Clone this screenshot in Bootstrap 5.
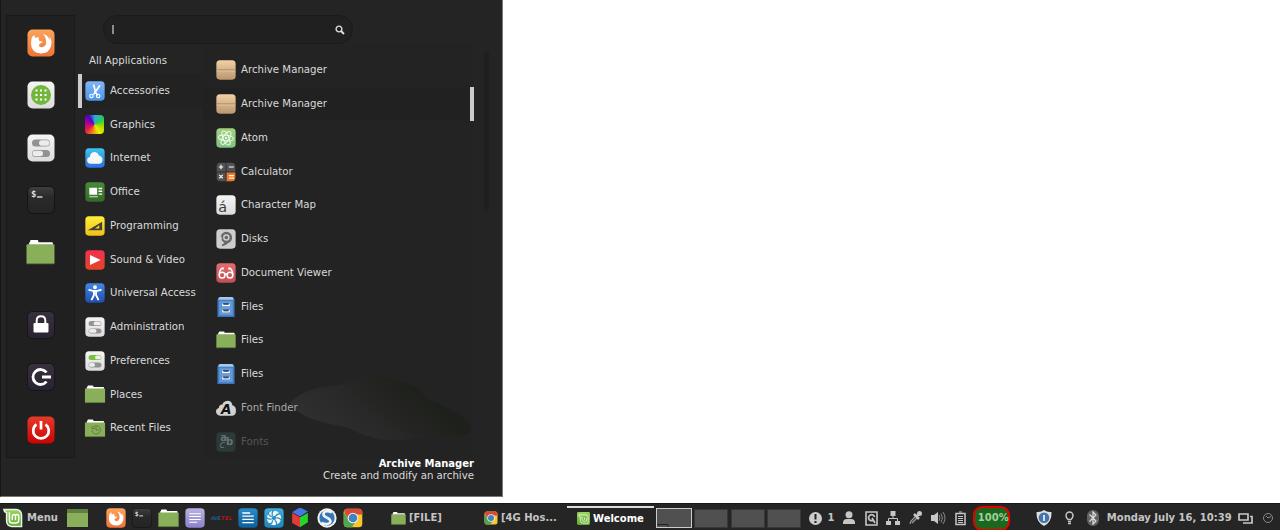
<!DOCTYPE html>
<html lang="en">
<head>
<meta charset="utf-8">
<meta name="viewport" content="width=device-width, initial-scale=1">
<title>Desktop menu</title>
<link rel="stylesheet" href="https://cdn.jsdelivr.net/npm/bootstrap@5.3.0/dist/css/bootstrap.min.css">
<style>
body{font:10.2px/14px "DejaVu Sans",sans-serif;color:#dadada;background:#fff;height:530px}
svg{display:block;flex:none;overflow:visible}
.start-menu{width:503px;height:497px;background:#242424;border-right:1px solid #777;border-bottom:1px solid #777;border-left:1px solid #151515;padding:15px 0 0 5px}
.favorites{width:69px;height:443px;background:#202020;border:1px solid #191919;padding:.5px 0 1px}
.favorites .slot{height:52.5px}
.search-box{width:250px;height:29px;margin-left:28px;border:1px solid #1a1a1a;border-radius:15px;background:#202020;padding:0 7px 0 8px}
.caret{width:2px;height:9px;background:#8c8c8c}
.cats{width:128px;padding-left:3px}
.all-apps{height:30px;padding:10px 0 0 11px}
.entry{position:relative;height:33.75px;white-space:nowrap}
.cats .entry{border-left:4px solid transparent;padding-left:2.500px;gap:5.500px}
.cats .entry.current{border-color:#ccc;background:#222}
.apps{width:271px;padding:9.500px 0 0 0;position:relative;background:#232323}
.apps .entry{border-right:4px solid transparent;padding-left:13px;gap:5px}
.apps .entry.current{border-color:#ccc;background:#212121}
.scroller{width:5px;height:159px;background:#1f1f1f;margin:8px 0 0 10px}
.smoke{position:absolute;left:87px;top:331px}
.about{position:absolute;right:0;top:414px;line-height:12px;white-space:nowrap}
.about .fw-bold{font-size:10px}
.spectrum{width:19px;height:19px;margin:.5px;border-radius:4px;background:conic-gradient(#2caad8,#28cb5e 60deg,#8fdc00 95deg,#f0ee00 150deg,#f58a17 190deg,#e51b47 235deg,#a8009c 280deg,#5400c6 325deg,#2caad8)}
.taskbar{height:27px;background:#252525;border-top:1px solid #15191b;font-size:10px;font-weight:bold;color:#c4c4c4;white-space:nowrap;overflow:hidden;padding-top:2px}
.taskbar>*{flex:none}
.launch{width:26.3px}
.task{gap:3px}
.menu-label{margin-left:4px;width:40px}
.launchers{margin-left:15px}
.task-file{margin-left:25px;width:93px}
.task-web{width:83px}
.active-task{width:87px;height:24px;border-top:2px solid #ddd;padding-left:10px;padding-bottom:1px}
.desks{gap:2.500px;margin-left:2px}
.desk{width:34px;height:19px;background:#505050;border:1px solid #383838}
.desk.on{width:36px;height:20px;border:1px solid #ccc}
.alerts{gap:5px;margin-left:8px;width:28px}
.tray-slot{width:22.4px}
.battery-pct{width:37px;height:25px;border:2px solid #e60000;border-radius:9px;background:#1d661d;padding-left:3px;margin-left:1px;color:#9ed29e}
.shield{margin-left:26px}
.bulb{margin-left:13px}
.bt{margin-left:13px}
.clock-text{margin-left:8px;width:131px}
.dial{margin-left:10px}
</style>
</head>
<body class="d-flex flex-column justify-content-between overflow-hidden">
<svg width="0" height="0" class="position-absolute" aria-hidden="true">
<defs>
<linearGradient id="g-fox" x2="0" y2="1"><stop stop-color="#fba35c"/><stop offset="1" stop-color="#ef7434"/></linearGradient>
<linearGradient id="g-white" x2="0" y2="1"><stop stop-color="#f5f5f5"/><stop offset="1" stop-color="#dcdcdc"/></linearGradient>
<linearGradient id="g-term" x2="0" y2="1"><stop stop-color="#3f3f3f"/><stop offset=".4" stop-color="#2a2a2a"/><stop offset="1" stop-color="#242424"/></linearGradient>
<linearGradient id="g-dark" x2="0" y2="1"><stop stop-color="#37313d"/><stop offset="1" stop-color="#282330"/></linearGradient>
<linearGradient id="g-red" x2="0" y2="1"><stop stop-color="#e63a2a"/><stop offset="1" stop-color="#cc0202"/></linearGradient>
<linearGradient id="g-blue" x2="0" y2="1"><stop stop-color="#7fb6f5"/><stop offset="1" stop-color="#4c94ea"/></linearGradient>
<linearGradient id="g-net" x2="0" y2="1"><stop stop-color="#3fc4ea"/><stop offset="1" stop-color="#2a6fe6"/></linearGradient>
<linearGradient id="g-office" x2="0" y2="1"><stop stop-color="#478a37"/><stop offset="1" stop-color="#336b28"/></linearGradient>
<linearGradient id="g-yel" x2="0" y2="1"><stop stop-color="#ffee3a"/><stop offset="1" stop-color="#eec11b"/></linearGradient>
<linearGradient id="g-vid" x2="0" y2="1"><stop stop-color="#f3304f"/><stop offset="1" stop-color="#e44428"/></linearGradient>
<linearGradient id="g-acc" x2="0" y2="1"><stop stop-color="#4585e6"/><stop offset="1" stop-color="#1d50b0"/></linearGradient>
<linearGradient id="g-box" x2="0" y2="1"><stop stop-color="#f3d1a3"/><stop offset="1" stop-color="#b9966f"/></linearGradient>
<linearGradient id="g-atom" x2="0" y2="1"><stop stop-color="#a3d37e"/><stop offset="1" stop-color="#7fc283"/></linearGradient>
<linearGradient id="g-doc" x2="0" y2="1"><stop stop-color="#e36c6f"/><stop offset="1" stop-color="#c04f53"/></linearGradient>
<linearGradient id="g-pur" x2="0" y2="1"><stop stop-color="#b9b2e2"/><stop offset="1" stop-color="#8a83cb"/></linearGradient>
<linearGradient id="g-wr" x2="0" y2="1"><stop stop-color="#2a8bc9"/><stop offset="1" stop-color="#0c5f9c"/></linearGradient>
<linearGradient id="g-shut" x2="0" y2="1"><stop stop-color="#3caedb"/><stop offset="1" stop-color="#1f84ba"/></linearGradient>
<linearGradient id="g-mint" x2="0" y2="1"><stop stop-color="#9bd55c"/><stop offset="1" stop-color="#5fa936"/></linearGradient>
<linearGradient id="g-smoke" x1="0" x2="1" y1=".6" y2=".2"><stop stop-color="#303030"/><stop offset=".3" stop-color="#2a2a2a"/><stop offset=".75" stop-color="#1e201b"/><stop offset="1" stop-color="#20221e"/></linearGradient>
<clipPath id="c-tile"><rect x="1" y="1" width="26" height="26" rx="5"/></clipPath>
</defs>
<symbol id="firefox" viewBox="0 0 28 28"><rect x=".5" y=".5" width="27" height="27" rx="5" fill="url(#g-fox)"/><path fill="#fff" d="M5 8l2.500-2 .5 3q2-1 4-.5-1 2 .5 3.500l3 .5q0 1.500-2.500 2-2 1.500-.5 3 2 1.500 4.500 0 2.500-1.500 2-5Q19 8 16 5q5 1 6.500 6 .5-2-.5-4 3.500 4 2 10-2 7.500-10 7.500Q4.500 24 4 15q0-4 1-7z"/></symbol>
<symbol id="appgrid" viewBox="0 0 28 28"><rect x=".5" y=".5" width="27" height="27" rx="5" fill="url(#g-white)"/><circle cx="14" cy="14" r="10" fill="#72b63c"/><path d="M8.500 9.500h11M8.500 14h11M8.500 18.500h11" stroke="#fff" stroke-width="2" stroke-dasharray="2 2.500"/></symbol>
<symbol id="toggles" viewBox="0 0 28 28"><rect x=".5" y=".5" width="27" height="27" rx="5" fill="url(#g-white)"/><rect x="5" y="5.500" width="18" height="7" rx="3.500" fill="#929292"/><rect x="12" y="6.300" width="10.500" height="5.400" rx="2.700" fill="#ececec"/><rect x="5" y="16" width="18" height="7" rx="3.500" fill="#929292"/><rect x="5.500" y="16.800" width="10.500" height="5.400" rx="2.700" fill="#ececec"/></symbol>
<symbol id="toggles-on" viewBox="0 0 28 28"><rect x=".5" y=".5" width="27" height="27" rx="5" fill="url(#g-white)"/><rect x="5" y="5.500" width="18" height="7" rx="3.500" fill="#79c238"/><rect x="14" y="6.300" width="8.500" height="5.400" rx="2.700" fill="#ececec"/><rect x="5" y="16" width="18" height="7" rx="3.500" fill="#929292"/><rect x="5.500" y="16.800" width="8.500" height="5.400" rx="2.700" fill="#ececec"/></symbol>
<symbol id="terminal" viewBox="0 0 28 28"><rect x=".5" y=".5" width="27" height="27" rx="5" fill="url(#g-term)" stroke="#141414"/><text x="4" y="10.500" font-family="DejaVu Sans Mono,monospace" font-weight="bold" font-size="9" fill="#ddd">$</text><path d="M10 11h5.500" stroke="#bbb" stroke-width="1.700"/></symbol>
<symbol id="folder" viewBox="0 0 28 28"><path d="M3 10V5q0-1 1-1.500V3q0-1 1-1h6q1 0 1 2h13q1 0 1 1v5z" fill="#fff"/><path d="M.5 7q0-1 1-1h25q1 0 1 1v17q0 1-1 1h-25q-1 0-1-1z" fill="#8aaf5a"/><path d="M.5 24.800h27" stroke="#5d7a3b"/></symbol>
<symbol id="lock" viewBox="0 0 28 28"><rect x=".5" y=".5" width="27" height="27" rx="5" fill="url(#g-dark)" stroke="#17141b"/><rect x="6.500" y="12" width="15" height="9.500" rx="1" fill="#fff"/><path d="M9.700 13V9.500q0-4.300 4.300-4.300t4.300 4.300V13" fill="none" stroke="#fff" stroke-width="2"/></symbol>
<symbol id="logout" viewBox="0 0 28 28"><rect x=".5" y=".5" width="27" height="27" rx="5" fill="url(#g-dark)" stroke="#17141b"/><path d="M19.500 9.500A7.500 7.500 0 1 0 19.500 18.500M15 14h9" fill="none" stroke="#fff" stroke-width="2.800"/></symbol>
<symbol id="power" viewBox="0 0 28 28"><rect x=".5" y=".5" width="27" height="27" rx="5" fill="url(#g-red)"/><path d="M9.500 8.300A7.800 7.800 0 1 0 18.500 8.300M14 5v8.500" fill="none" stroke="#fff" stroke-width="2.700"/></symbol>
<symbol id="scissors" viewBox="0 0 28 28"><rect x=".5" y=".5" width="27" height="27" rx="5" fill="url(#g-blue)"/><path d="M12 5l3 11M21 6l-9 13M13 14l5 6" stroke="#fff" stroke-width="2.200"/><circle cx="9" cy="21" r="2.400" fill="none" stroke="#fff" stroke-width="1.600"/><circle cx="18.500" cy="21" r="2.400" fill="none" stroke="#fff" stroke-width="1.600"/></symbol>
<symbol id="cloud" viewBox="0 0 28 28"><rect x=".5" y=".5" width="27" height="27" rx="5" fill="url(#g-net)"/><path d="M7 22q-4-1-4-5t4-4.500q0-6 6-7 5 0 6.500 5 5 1 5 6t-4 5.500z" fill="#f7f7f7"/></symbol>
<symbol id="office" viewBox="0 0 28 28"><rect x=".5" y=".5" width="27" height="27" rx="5" fill="url(#g-office)"/><path d="M6 8h11v10H6zM19 8h5v2h-5zm0 4h5v2h-5zm0 4h5v2h-5z" fill="#fff"/><path d="M6 20.500h12" stroke="#abc6a5" stroke-width="2"/></symbol>
<symbol id="program" viewBox="0 0 28 28"><rect x=".5" y=".5" width="27" height="27" rx="5" fill="url(#g-yel)"/><path fill-rule="evenodd" d="M4 20L24 8v12zM14 17.500h6V13z" fill="#463f35"/></symbol>
<symbol id="video" viewBox="0 0 28 28"><rect x=".5" y=".5" width="27" height="27" rx="5" fill="url(#g-vid)"/><path d="M7 7l15 7-15 7z" fill="#fff"/></symbol>
<symbol id="access" viewBox="0 0 28 28"><rect x=".5" y=".5" width="27" height="27" rx="5" fill="url(#g-acc)"/><circle cx="14" cy="6" r="2.700" fill="#fff"/><path d="M5 9.500l6 1.500h6l6-1.500M12.500 11v6L9 24M15.500 11v6l3.500 7" fill="none" stroke="#fff" stroke-width="2.700"/></symbol>
<symbol id="archive" viewBox="0 0 28 28"><rect x=".5" y=".5" width="27" height="27" rx="5" fill="url(#g-box)"/><path d="M1 14h26" stroke="#9a7d61" stroke-width="1.300"/><path d="M1 15.300h26" stroke="#ecd0ac"/></symbol>
<symbol id="atom" viewBox="0 0 28 28"><rect x=".5" y=".5" width="27" height="27" rx="5" fill="url(#g-atom)"/><g fill="none" stroke="#f1faec" stroke-width="1.400"><ellipse cx="14" cy="14" rx="10.500" ry="4" transform="rotate(8 14 14)"/><ellipse cx="14" cy="14" rx="10.500" ry="4" transform="rotate(67 14 14)"/><ellipse cx="14" cy="14" rx="10.500" ry="4" transform="rotate(125 14 14)"/></g><circle cx="14" cy="14" r="1.500" fill="#fff"/></symbol>
<symbol id="calc" viewBox="0 0 28 28"><g clip-path="url(#c-tile)"><path d="M0 0h28v28H0z" fill="#525252"/><path d="M14.500 14.500H28V28H14.500z" fill="#f47523"/></g><path d="M14 1v26M1 14h26" stroke="#242424"/><path d="M4 7h6M7 4v6M18 7h7M4.500 18l5 5M9.500 18l-5 5M18 19h7M18 22.500h7" stroke="#fff" stroke-width="1.600"/></symbol>
<symbol id="disks" viewBox="0 0 28 28"><rect x=".5" y=".5" width="27" height="27" rx="5" fill="#cecece"/><circle cx="14.500" cy="12" r="6.300" fill="none" stroke="#696969" stroke-width="3.500"/><circle cx="14.500" cy="12" r="2.500" fill="#696969"/><path d="M4 11h4v5l4 4-4 4-3-3 3-2z" fill="#cecece"/><path d="M8 22l5-3 4 1q-3 3-8 4z" fill="#696969"/></symbol>
<symbol id="viewer" viewBox="0 0 28 28"><rect x=".5" y=".5" width="27" height="27" rx="5" fill="url(#g-doc)"/><g fill="none" stroke="#fff" stroke-width="2"><circle cx="8.500" cy="17" r="4"/><circle cx="19.500" cy="17" r="4"/><path d="M12.500 16q1.500-1 3 0M4.500 17q0-8 5-10l1 2M23.500 17q0-8-5-10l-1 2"/></g></symbol>
<symbol id="cabinet" viewBox="0 0 28 28"><path d="M4 0h20l2 4v24H2V4z" fill="#3974bd"/><path d="M5 0h18l2 4H3z" fill="#a4c7ea"/><path d="M4 5h20v21H4z" fill="#5b91d2"/><path d="M7 7.500h14v7H7zM7 16.500h14v7H7z" fill="#487ebd" stroke="#80ade2"/><path d="M9.500 9v3h9V9M9.500 18v3h9v-3" fill="none" stroke="#fff" stroke-width="1.700"/><path d="M10 9.500h8M10 18.500h8" stroke="#373d48" stroke-width="1.500"/></symbol>
<symbol id="chrome" viewBox="0 0 28 28"><g clip-path="url(#c-tile)"><path d="M0 0h28v28H0z" fill="#f7c82e"/><path d="M0 0h28v9H14l-5 8L3 8z" fill="#da4938"/><path d="M0 4l9 14 8 2-5 8H0z" fill="#53a351"/></g><circle cx="14" cy="14" r="7.500" fill="#eee"/><circle cx="14" cy="14" r="6" fill="#4382c4"/></symbol>
<symbol id="notes" viewBox="0 0 28 28"><rect x=".5" y=".5" width="27" height="27" rx="5" fill="url(#g-pur)"/><path d="M6 8h16M6 12h16M6 16h16M6 20h11" stroke="#fff" stroke-width="1.500"/></symbol>
<symbol id="writer" viewBox="0 0 28 28"><rect x=".5" y=".5" width="27" height="27" rx="5" fill="url(#g-wr)"/><path d="M6 7h11M6 11.500h16M6 16h16M6 20.500h16" stroke="#fff" stroke-width="1.800"/></symbol>
<symbol id="shutter" viewBox="0 0 28 28"><rect x=".5" y=".5" width="27" height="27" rx="5" fill="url(#g-shut)"/><circle cx="14" cy="14" r="10" fill="#f4fafc"/><path d="M14 3q-4 3-2 8M23 8q-5 0-7 4M24 17q-2-4-7-3M17 25q2-5-2-8M7 22q5 0 5-5M4 13q2 4 7 2M6 6q0 5 5 6" fill="none" stroke="#288fbe" stroke-width="1.700"/><circle cx="14" cy="14" r="3" fill="#288fbe"/></symbol>
<symbol id="cube" viewBox="0 0 28 28"><path d="M14-1l11 6-11 7L3 6z" fill="#4778e2"/><path d="M3 7l11 6v14L3 21z" fill="#e53a3a"/><path d="M25 7l-11 6v14l11-7z" fill="#26d52c"/></symbol>
<symbol id="swirl" viewBox="0 0 28 28"><circle cx="14" cy="14" r="13.500" fill="#f2f2f2"/><circle cx="14" cy="14" r="10.700" fill="#3675b5"/><path d="M21 6q-10-4-12 2c-1 6 10 5 10 11q-2 6-13 2" fill="none" stroke="#f2f2f2" stroke-width="3.600"/></symbol>
<symbol id="mint" viewBox="0 0 28 28"><path d="M0 1h19q8 1 8 9v17H12q-8-1-8-9V7Q1 7 0 1z" fill="#ecf5e5"/><path d="M3 3h16q6 1 6 7v15H12q-6-1-6-7V6Q4 6 3 3z" fill="url(#g-mint)"/><path d="M9 6v11q0 4 4 4h5q4 0 4-4v-5q0-3-2.300-3T17.500 12v5M17.500 12q0-3-2.200-3T13 12v5" fill="none" stroke="#fff" stroke-width="2"/></symbol>
<symbol id="mint-tile" viewBox="0 0 28 28"><rect width="28" height="28" rx="3" fill="url(#g-mint)"/><path d="M4 6h15q5 0 5 6v12H13q-6 0-6-6v-8q-3 0-3-4z" fill="none" stroke="#e9f6df" stroke-width="1.800"/><path d="M11 10v6q0 4 4 4h2q4 0 4-3v-4M16 12v5" fill="none" stroke="#e9f6df" stroke-width="1.800"/></symbol>
</svg>

<main class="start-menu d-flex">
  <nav class="favorites d-flex flex-column" aria-label="Favorites">
    <div class="slot d-flex align-items-center justify-content-center"><svg width="28" height="28"><use href="#firefox"/></svg></div>
    <div class="slot d-flex align-items-center justify-content-center"><svg width="28" height="28"><use href="#appgrid"/></svg></div>
    <div class="slot d-flex align-items-center justify-content-center"><svg width="28" height="28"><use href="#toggles"/></svg></div>
    <div class="slot d-flex align-items-center justify-content-center"><svg width="28" height="28"><use href="#terminal"/></svg></div>
    <div class="slot d-flex align-items-center justify-content-center"><svg width="29" height="29"><use href="#folder"/></svg></div>
    <div class="mt-auto">
      <div class="slot d-flex align-items-center justify-content-center"><svg width="28" height="28"><use href="#lock"/></svg></div>
      <div class="slot d-flex align-items-center justify-content-center"><svg width="28" height="28"><use href="#logout"/></svg></div>
      <div class="slot d-flex align-items-center justify-content-center"><svg width="28" height="28"><use href="#power"/></svg></div>
    </div>
  </nav>
  <div class="flex-grow-1">
    <div class="search-box d-flex align-items-center justify-content-between"><span class="caret"></span><svg width="10" height="10" fill="none" stroke="#ddd"><circle cx="4" cy="4" r="2.900" stroke-width="1.400"/><path d="M6 6l3 3" stroke-width="2"/></svg></div>
    <div class="d-flex">
      <div class="cats">
        <div class="all-apps">All Applications</div>
        <div class="entry current d-flex align-items-center"><svg width="20" height="20"><use href="#scissors"/></svg>Accessories</div>
        <div class="entry d-flex align-items-center"><span class="spectrum"></span>Graphics</div>
        <div class="entry d-flex align-items-center"><svg width="20" height="20"><use href="#cloud"/></svg>Internet</div>
        <div class="entry d-flex align-items-center"><svg width="20" height="20"><use href="#office"/></svg>Office</div>
        <div class="entry d-flex align-items-center"><svg width="20" height="20"><use href="#program"/></svg>Programming</div>
        <div class="entry d-flex align-items-center"><svg width="20" height="20"><use href="#video"/></svg>Sound &amp; Video</div>
        <div class="entry d-flex align-items-center"><svg width="20" height="20"><use href="#access"/></svg>Universal Access</div>
        <div class="entry d-flex align-items-center"><svg width="20" height="20"><use href="#toggles"/></svg>Administration</div>
        <div class="entry d-flex align-items-center"><svg width="20" height="20"><use href="#toggles-on"/></svg>Preferences</div>
        <div class="entry d-flex align-items-center"><svg width="20" height="21" viewBox="0 0 20 21"><use href="#folder" x="-.5" width="21" height="21"/></svg>Places</div>
        <div class="entry d-flex align-items-center"><svg width="20" height="21" viewBox="0 0 20 21"><use href="#folder" x="-.5" width="21" height="21"/><path d="M7 12a4.200 4.200 0 1 0 1.500-3.300M7 8v2.500h3M11 9v3h3" fill="none" stroke="#5d8040"/></svg>Recent Files</div>
      </div>
      <div class="apps">
        <svg class="smoke" width="184" height="70" viewBox="0 0 184 70"><path d="M0 28Q15 12 50 10 65 0 93 2q34 4 43 22 33 11 44 26 7 12-20 12l-34 1q-34 8-70-11Q10 45 0 28z" fill="url(#g-smoke)"/></svg>
        <div class="entry d-flex align-items-center"><svg width="20" height="20"><use href="#archive"/></svg>Archive Manager</div>
        <div class="entry current d-flex align-items-center"><svg width="20" height="20"><use href="#archive"/></svg>Archive Manager</div>
        <div class="entry d-flex align-items-center"><svg width="20" height="20"><use href="#atom"/></svg>Atom</div>
        <div class="entry d-flex align-items-center"><svg width="20" height="20"><use href="#calc"/></svg>Calculator</div>
        <div class="entry d-flex align-items-center"><svg width="20" height="20" viewBox="0 0 28 28"><rect x=".5" y=".5" width="27" height="27" rx="5" fill="url(#g-white)"/><text x="3" y="24" font-size="20" fill="#3c3c3c">á</text></svg>Character Map</div>
        <div class="entry d-flex align-items-center"><svg width="20" height="20"><use href="#disks"/></svg>Disks</div>
        <div class="entry d-flex align-items-center"><svg width="20" height="20"><use href="#viewer"/></svg>Document Viewer</div>
        <div class="entry d-flex align-items-center"><svg width="20" height="20"><use href="#cabinet"/></svg>Files</div>
        <div class="entry d-flex align-items-center"><svg width="20" height="20"><use href="#folder"/></svg>Files</div>
        <div class="entry d-flex align-items-center"><svg width="20" height="20"><use href="#cabinet"/></svg>Files</div>
        <div class="entry d-flex align-items-center" style="color:#aaa"><svg width="20" height="20" viewBox="0 0 28 28"><path d="M6 25q-6-1-6-6 0-4 4-5 0-5 5-5 1-4 7-5 6 0 7 6 5 1 5 8 0 6-5 7z" fill="#d1d1d1"/><text x="7" y="23" font-size="19" font-weight="bold" font-style="italic" fill="#111">A</text></svg>Font Finder</div>
        <div class="entry d-flex align-items-center" style="color:#555"><svg width="20" height="20" viewBox="0 0 28 28"><rect x=".5" y=".5" width="27" height="27" rx="5" fill="#2c3938"/><g font-size="14" fill="#687473"><text x="6" y="12" font-weight="bold">a</text><text x="14" y="18" font-weight="bold">b</text><text x="5" y="23" font-style="italic">c</text></g></svg>Fonts</div>
        <div class="about text-end"><div class="fw-bold text-white">Archive Manager</div>Create and modify an archive</div>
      </div>
      <div class="scroller"></div>
    </div>
  </div>
</main>

<footer class="taskbar d-flex align-items-center">
  <svg width="20" height="20" style="margin-left:3px"><use href="#mint"/></svg><span class="menu-label">Menu</span>
  <svg width="21" height="18"><path d="M0 0h21v18H0z" fill="#8aaf5a"/><path d="M0 0h21v4H0z" fill="#5f8140"/></svg>
  <div class="launchers d-flex align-items-center">
    <div class="launch d-flex justify-content-center"><svg width="20" height="20"><use href="#firefox"/></svg></div>
    <div class="launch d-flex justify-content-center"><svg width="20" height="20"><use href="#terminal"/></svg></div>
    <div class="launch d-flex justify-content-center"><svg width="21" height="21"><use href="#folder"/></svg></div>
    <div class="launch d-flex justify-content-center"><svg width="20" height="20"><use href="#notes"/></svg></div>
    <div class="launch d-flex justify-content-center align-items-center"><svg width="21" height="8"><text y="6" font-size="5" font-style="italic" textLength="10" fill="#1d5a7c">AVE</text><text x="10" y="6" font-size="5" font-style="italic" textLength="11" fill="#bd1117">TEL</text></svg></div>
    <div class="launch d-flex justify-content-center"><svg width="20" height="20"><use href="#writer"/></svg></div>
    <div class="launch d-flex justify-content-center"><svg width="20" height="20"><use href="#shutter"/></svg></div>
    <div class="launch d-flex justify-content-center"><svg width="20" height="20"><use href="#cube"/></svg></div>
    <div class="launch d-flex justify-content-center"><svg width="20" height="20"><use href="#swirl"/></svg></div>
    <div class="launch d-flex justify-content-center"><svg width="20" height="20"><use href="#chrome"/></svg></div>
  </div>
  <div class="task task-file d-flex align-items-center"><svg width="15" height="15"><use href="#folder"/></svg>[FILE]</div>
  <div class="task task-web d-flex align-items-center"><svg width="14" height="14"><use href="#chrome"/></svg>[4G Hos...</div>
  <div class="task active-task d-flex align-items-center text-white"><svg width="13" height="13"><use href="#mint-tile"/></svg>Welcome</div>
  <div class="desks d-flex align-items-center"><div class="desk on d-flex align-items-end"><svg width="12" height="3"><path d="M0 .500h11V3" fill="none" stroke="#222"/></svg></div><div class="desk"></div><div class="desk"></div><div class="desk"></div></div>
  <div class="alerts d-flex align-items-center"><svg width="13" height="13"><circle cx="6.500" cy="6.500" r="6.500" fill="#ccc"/><path d="M6.500 2v5.500M6.500 9v2" stroke="#222" stroke-width="2"/></svg>1</div>
  <div class="tray d-flex align-items-center">
    <div class="tray-slot d-flex justify-content-center"><svg width="12" height="14" fill="#c6c6c6"><circle cx="6" cy="3.700" r="3.500"/><path d="M0 13v-1q0-4 4-4h4q4 0 4 4v1z"/></svg></div>
    <div class="tray-slot d-flex justify-content-center"><svg width="13" height="15" fill="none" stroke="#c6c6c6"><path d="M1 1h11v13H1z" stroke-width="1.600"/><path d="M8.500 9A3 3 0 1 1 9.500 6M7 7l3 5" stroke-width="1.700"/></svg></div>
    <div class="tray-slot d-flex justify-content-center"><svg width="14" height="14" fill="#c6c6c6"><path d="M4.500 0h5v5h-5zM0 10h5v4H0zM9 10h5v4H9z"/><path d="M7 5v3M2.500 10V7.500h9V10" fill="none" stroke="#c6c6c6"/></svg></div>
    <div class="tray-slot d-flex justify-content-center"><svg width="13" height="14"><path d="M1 13l1-3 5-5M3 12l5-5" fill="none" stroke="#999" stroke-width="1.300"/><path d="M5 3l5 5M8 5l3-3" stroke="#c6c6c6" stroke-width="2.500"/><circle cx="10.500" cy="2.500" r="2.500" fill="#c6c6c6"/></svg></div>
    <div class="tray-slot d-flex justify-content-center"><svg width="14" height="14"><path d="M0 4h3l4-3v12l-4-3H0z" fill="#c6c6c6"/><path d="M8 4q2 3 0 6M10 2.500q3 4.500 0 9M12 1q4 6 0 12" fill="none" stroke="#888"/></svg></div>
    <div class="tray-slot d-flex justify-content-center"><svg width="11" height="14" fill="none" stroke="#c6c6c6"><path d="M1 2.500h9v11H1z" stroke-width="1.500"/><path d="M4 1h3M3 5.500h5M3 7.500h5M3 9.500h5M3 11.500h5"/></svg></div>
  </div>
  <div class="battery-pct d-flex align-items-center">100%</div>
  <div class="status d-flex align-items-center">
    <svg class="shield" width="16" height="16"><path d="M8 0q3 2.500 7.500 2Q16 12 8 16 0 12 .5 2 5 2.500 8 0z" fill="#dedede"/><circle cx="8" cy="7.700" r="5.300" fill="#4275ad"/><path d="M8 5v6" stroke="#d4e0ee" stroke-width="2"/></svg>
    <svg class="bulb" width="9" height="14" fill="none" stroke="#c6c6c6"><path d="M3 8.500Q1 6.500 1 4.500a3.500 3.500 0 0 1 7 0q0 2-2 4z" stroke-width="1.500"/><path d="M3 10.500h3M3 12.500h3" stroke-width="1.500"/></svg>
    <svg class="bt" width="12" height="16"><rect width="12" height="16" rx="6" fill="#626262"/><path d="M2.500 4.500l6.500 6.500-3 3V2l3 3-6.500 6.500" fill="none" stroke="#ddd" stroke-width="1.200"/></svg>
    <span class="clock-text">Monday July 16, 10:39</span>
    <svg width="15" height="11" fill="none" stroke="#c9c9c9" stroke-width="1.700"><path d="M1 1h9v6H1zM12 3.500h2v6.500H5"/></svg>
    <svg class="dial" width="10" height="10" fill="none" stroke="#8b8b8b"><circle cx="5" cy="5" r="4.500"/><path d="M3 3l2 2 3-1.500"/></svg>
  </div>
</footer>
<script src="https://cdn.jsdelivr.net/npm/bootstrap@5.3.0/dist/js/bootstrap.bundle.min.js"></script>
</body>
</html>
